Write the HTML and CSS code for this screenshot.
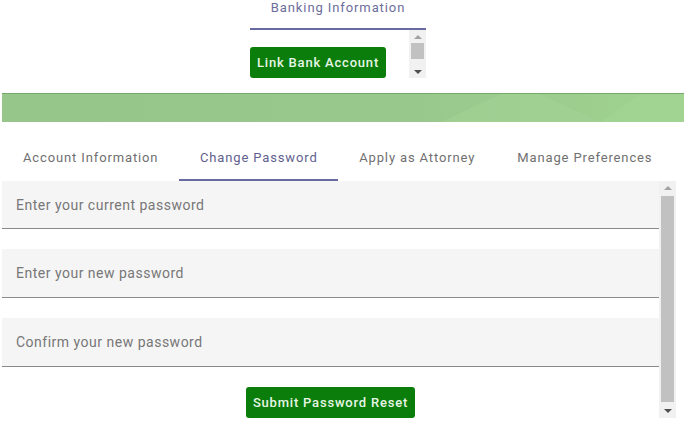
FILE: index.html
```html
<!DOCTYPE html>
<html>
<head>
<meta charset="utf-8">
<link rel="stylesheet" href="styles.css">
</head>
<body>
<div class="page">
  <div class="bank">
    <div class="bank-tab">Banking Information</div>
    <div class="bank-panel">
      <div class="bank-content">
        <button class="btn">Link Bank Account</button>
      </div>
      <div class="sbar small">
        <div class="arrow up"></div>
        <div class="track"><div class="thumb"></div></div>
        <div class="arrow down"></div>
      </div>
    </div>
  </div>

  <div class="banner">
    <svg class="banner-art" viewBox="0 0 684 29" preserveAspectRatio="none">
      <polygon points="440,29 500,0 540,0 600,29" fill="#a3d495" opacity="0.5"/>
      <polygon points="600,29 640,0 684,0 684,29" fill="#a5d696" opacity="0.4"/>
    </svg>
  </div>

  <div class="tabs">
    <div class="tab">Account Information</div>
    <div class="tab active">Change Password</div>
    <div class="tab">Apply as Attorney</div>
    <div class="tab">Manage Preferences</div>
  </div>

  <div class="pw-panel">
    <div class="pw-content">
      <div class="field">Enter your current password</div>
      <div class="field">Enter your new password</div>
      <div class="field">Confirm your new password</div>
      <div class="submit-row"><button class="btn">Submit Password Reset</button></div>
    </div>
    <div class="sbar big">
      <div class="arrow up"></div>
      <div class="track"><div class="thumb"></div></div>
      <div class="arrow down"></div>
    </div>
  </div>
</div>
</body>
</html>
```
FILE: styles.css
```css
* { box-sizing: border-box; }
html, body { margin: 0; padding: 0; background: #fff; }
body {
  font-family: Roboto, "Liberation Sans", sans-serif;
  width: 684px;
  height: 421px;
  overflow: hidden;
}
.page { padding-left: 2px; }

.bank { width: 176px; margin-left: 248px; }
.bank-tab {
  height: 30px;
  border-bottom: 2px solid #6a6aa2;
  color: #6d6d9c;
  font-size: 13px;
  letter-spacing: 0.9px;
  text-align: center;
  line-height: 16px;
}
.bank-panel { display: flex; height: 48px; }
.bank-content { flex: 1; padding-top: 17px; }

.btn {
  background: #0b7d0b;
  color: #e6f6e4;
  border: none;
  border-radius: 3px;
  font-family: Roboto, "Liberation Sans", sans-serif;
  font-weight: 500;
  font-size: 13px;
  letter-spacing: 0.8px;
  height: 31px;
  padding: 0 7px;
  cursor: pointer;
}

.sbar {
  width: 17px;
  background: #f1f1f1;
  display: flex;
  flex-direction: column;
  align-items: center;
}
.sbar .arrow { height: 14px; width: 17px; display: flex; align-items: center; justify-content: center; }
.sbar .arrow::before {
  content: "";
  border-left: 4px solid transparent;
  border-right: 4px solid transparent;
}
.sbar .arrow.up::before { border-bottom: 4px solid #a3a3a3; }
.sbar .arrow.down::before { border-top: 4px solid #505050; }
.sbar .track { flex: 1; width: 100%; padding: 0 2px; }
.sbar .thumb { background: #c1c1c1; height: 100%; }
.sbar.small .track { padding-bottom: 4px; }
.sbar.small .thumb { height: 16px; }
.sbar.small .arrow { height: 13px; }

.banner {
  margin-top: 15px;
  height: 29px;
  background: linear-gradient(90deg, #97c68a 0%, #99c88c 60%, #9fd290 100%);
  border-top: 1px solid #76a96a;
  position: relative;
  overflow: hidden;
}
.banner-art { position: absolute; inset: 0; width: 100%; height: 100%; }

.tabs { display: flex; margin-top: 14px; }
.tab {
  height: 45px;
  padding: 0 21px;
  display: flex;
  align-items: center;
  justify-content: center;
  color: #707070;
  font-size: 13px;
  letter-spacing: 0.87px;
  border-bottom: 2px solid transparent;
}
.tab.active { color: #5f5f8f; border-bottom-color: #6a6aa2; padding: 0 20.5px; }

.pw-panel { display: flex; height: 240px; width: 674px; }
.pw-content { flex: 1; }
.field {
  height: 49px;
  background: #f5f5f5;
  border-bottom: 1px solid #8a8a8a;
  color: #777;
  font-size: 14px;
  letter-spacing: 0.5px;
  padding-left: 14px;
  display: flex;
  align-items: center;
  margin-bottom: 20px;
}
.field:first-child { height: 48px; }
.submit-row { display: flex; justify-content: center; }
.sbar.big { height: 237px; }
.sbar.big .track { padding-top: 1px; padding-bottom: 2px; }
```
